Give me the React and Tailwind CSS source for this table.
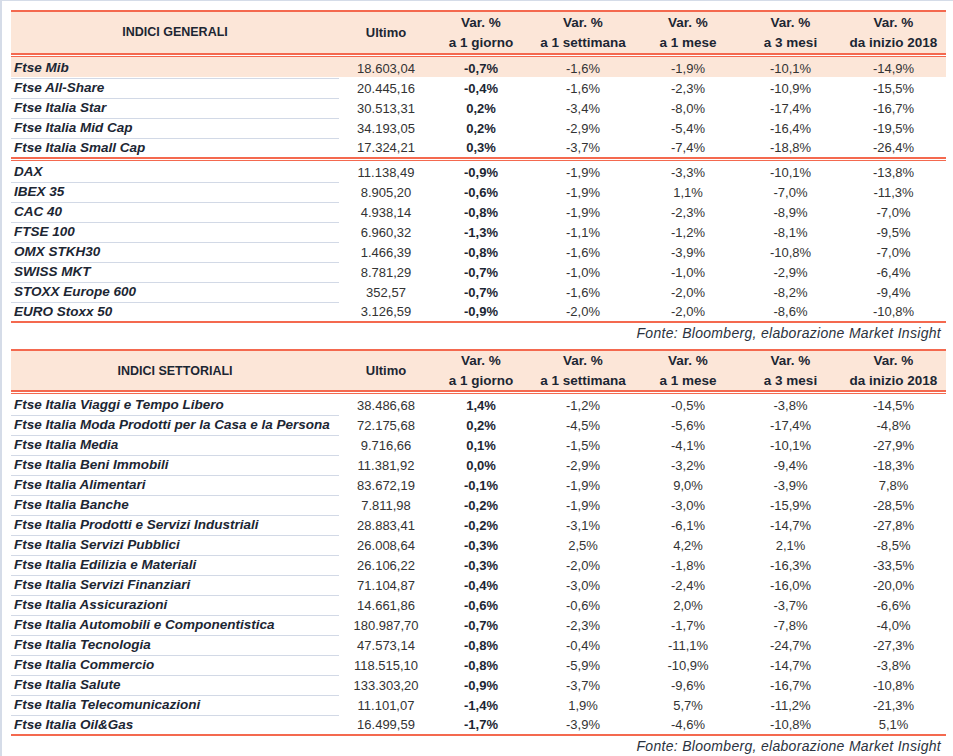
import React from "react";

const RED = "bg-[#f4694f]";
const cols = "grid grid-cols-[328px_94px_96px_108px_102px_103px_103px]";

const gen1 = [
  ["Ftse Mib", "18.603,04", "-0,7%", "-1,6%", "-1,9%", "-10,1%", "-14,9%"],
  ["Ftse All-Share", "20.445,16", "-0,4%", "-1,6%", "-2,3%", "-10,9%", "-15,5%"],
  ["Ftse Italia Star", "30.513,31", "0,2%", "-3,4%", "-8,0%", "-17,4%", "-16,7%"],
  ["Ftse Italia Mid Cap", "34.193,05", "0,2%", "-2,9%", "-5,4%", "-16,4%", "-19,5%"],
  ["Ftse Italia Small Cap", "17.324,21", "0,3%", "-3,7%", "-7,4%", "-18,8%", "-26,4%"],
];
const gen2 = [
  ["DAX", "11.138,49", "-0,9%", "-1,9%", "-3,3%", "-10,1%", "-13,8%"],
  ["IBEX 35", "8.905,20", "-0,6%", "-1,9%", "1,1%", "-7,0%", "-11,3%"],
  ["CAC 40", "4.938,14", "-0,8%", "-1,9%", "-2,3%", "-8,9%", "-7,0%"],
  ["FTSE 100", "6.960,32", "-1,3%", "-1,1%", "-1,2%", "-8,1%", "-9,5%"],
  ["OMX STKH30", "1.466,39", "-0,8%", "-1,6%", "-3,9%", "-10,8%", "-7,0%"],
  ["SWISS MKT", "8.781,29", "-0,7%", "-1,0%", "-1,0%", "-2,9%", "-6,4%"],
  ["STOXX Europe 600", "352,57", "-0,7%", "-1,6%", "-2,0%", "-8,2%", "-9,4%"],
  ["EURO Stoxx 50", "3.126,59", "-0,9%", "-2,0%", "-2,0%", "-8,6%", "-10,8%"],
];
const sett = [
  ["Ftse Italia Viaggi e Tempo Libero", "38.486,68", "1,4%", "-1,2%", "-0,5%", "-3,8%", "-14,5%"],
  ["Ftse Italia Moda Prodotti per la Casa e la Persona", "72.175,68", "0,2%", "-4,5%", "-5,6%", "-17,4%", "-4,8%"],
  ["Ftse Italia Media", "9.716,66", "0,1%", "-1,5%", "-4,1%", "-10,1%", "-27,9%"],
  ["Ftse Italia Beni Immobili", "11.381,92", "0,0%", "-2,9%", "-3,2%", "-9,4%", "-18,3%"],
  ["Ftse Italia Alimentari", "83.672,19", "-0,1%", "-1,9%", "9,0%", "-3,9%", "7,8%"],
  ["Ftse Italia Banche", "7.811,98", "-0,2%", "-1,9%", "-3,0%", "-15,9%", "-28,5%"],
  ["Ftse Italia Prodotti e Servizi Industriali", "28.883,41", "-0,2%", "-3,1%", "-6,1%", "-14,7%", "-27,8%"],
  ["Ftse Italia Servizi Pubblici", "26.008,64", "-0,3%", "2,5%", "4,2%", "2,1%", "-8,5%"],
  ["Ftse Italia Edilizia e Materiali", "26.106,22", "-0,3%", "-2,0%", "-1,8%", "-16,3%", "-33,5%"],
  ["Ftse Italia Servizi Finanziari", "71.104,87", "-0,4%", "-3,0%", "-2,4%", "-16,0%", "-20,0%"],
  ["Ftse Italia Assicurazioni", "14.661,86", "-0,6%", "-0,6%", "2,0%", "-3,7%", "-6,6%"],
  ["Ftse Italia Automobili e Componentistica", "180.987,70", "-0,7%", "-2,3%", "-1,7%", "-7,8%", "-4,0%"],
  ["Ftse Italia Tecnologia", "47.573,14", "-0,8%", "-0,4%", "-11,1%", "-24,7%", "-27,3%"],
  ["Ftse Italia Commercio", "118.515,10", "-0,8%", "-5,9%", "-10,9%", "-14,7%", "-3,8%"],
  ["Ftse Italia Salute", "133.303,20", "-0,9%", "-3,7%", "-9,6%", "-16,7%", "-10,8%"],
  ["Ftse Italia Telecomunicazioni", "11.101,07", "-1,4%", "1,9%", "5,7%", "-11,2%", "-21,3%"],
  ["Ftse Italia Oil&Gas", "16.499,59", "-1,7%", "-3,9%", "-4,6%", "-10,8%", "5,1%"],
];

function DoubleLine() {
  return (
    <div className="flex flex-col">
      <div className={`h-[2px] ${RED}`} />
      <div className="h-px" />
      <div className={`h-px ${RED}`} />
    </div>
  );
}

function Header({ title, h }) {
  const sub = ["a 1 giorno", "a 1 settimana", "a 1 mese", "a 3 mesi", "da inizio 2018"];
  return (
    <div className={`${cols} ${h} bg-[#fce6d8] font-bold text-[#1c2633]`}>
      <div className="flex items-center justify-center text-[12.5px]">{title}</div>
      <div className="flex items-center justify-center text-[13px]">Ultimo</div>
      {sub.map((s) => (
        <div key={s} className="flex flex-col items-center justify-center leading-[20px] text-[13.5px] whitespace-nowrap">
          <span>Var. %</span>
          <span>{s}</span>
        </div>
      ))}
    </div>
  );
}

function Row({ r, last, hl }) {
  return (
    <div className={`${cols} h-[20px] text-[13px] ${hl ? "bg-[#fce6d8]" : ""}`}>
      <div
        className={`flex items-center pl-[3px] pt-px font-bold italic text-[13.5px] text-[#1c2633] whitespace-nowrap ${
          last ? "" : "border-b border-[#d2d9e6]"
        }`}
      >
        {r[0]}
      </div>
      <div className="flex items-center justify-center pt-px text-[#333]">{r[1]}</div>
      <div className="flex items-center justify-center pt-px font-bold text-[#1c2633]">{r[2]}</div>
      {r.slice(3).map((v, i) => (
        <div key={i} className="flex items-center justify-center pt-px text-[#333]">
          {v}
        </div>
      ))}
    </div>
  );
}

function Fonte() {
  return (
    <div className="h-[20px] flex items-center justify-end pr-[5px] text-[14px] tracking-[0.3px] italic text-[#2b3340] whitespace-nowrap">
      Fonte: Bloomberg, elaborazione Market Insight
    </div>
  );
}

export default function App() {
  return (
    <div
      className="w-[953px] h-[756px] bg-white border-l-2 border-t border-[#d5dce8] overflow-hidden"
      style={{ fontFamily: '"Liberation Sans", Arial, sans-serif' }}
    >
      <div className="pl-[9px] pt-[9px] w-[944px]">
        <div className={`h-[2px] ${RED}`} />
        <Header title="INDICI GENERALI" h="h-[41px]" />
        <DoubleLine />
        {gen1.map((r, i) => (
          <Row key={r[0]} r={r} hl={i === 0} last={i === gen1.length - 1} />
        ))}
        <DoubleLine />
        {gen2.map((r, i) => (
          <Row key={r[0]} r={r} last={i === gen2.length - 1} />
        ))}
        <div className={`h-[2px] ${RED}`} />
        <Fonte />
        <div className="h-[6px]" />
        <div className={`h-[2px] ${RED}`} />
        <Header title="INDICI SETTORIALI" h="h-[39px]" />
        <DoubleLine />
        {sett.map((r, i) => (
          <Row key={r[0]} r={r} last={i === sett.length - 1} />
        ))}
        <div className={`h-[2px] ${RED}`} />
        <Fonte />
      </div>
    </div>
  );
}
